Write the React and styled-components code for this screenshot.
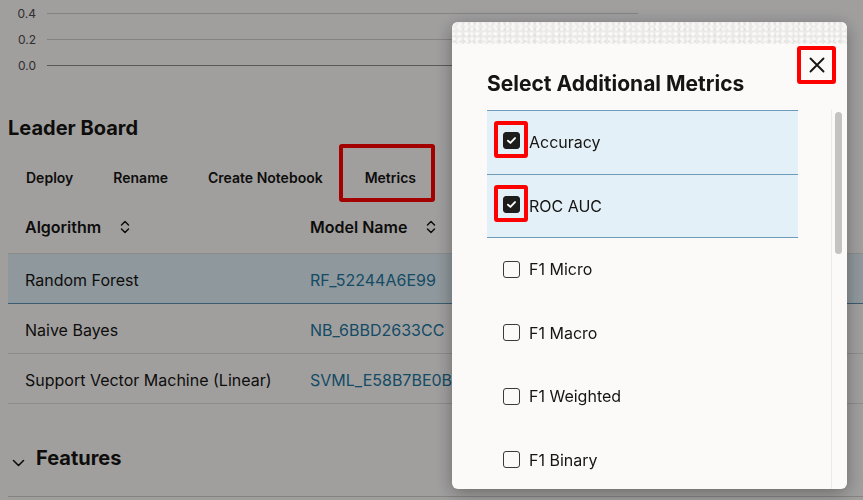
import styled, { createGlobalStyle } from "styled-components";

const GlobalStyle = createGlobalStyle`
  html, body {
    margin: 0;
    background: #fbf9f8;
  }
  body {
    font-family: Inter, "Noto Sans", sans-serif;
    color: #161513;
    overflow: hidden;
  }
`;

const Page = styled.div`
  padding-left: 8px;
  height: 500px;
`;

// chart remains (scrolled up, only the bottom ticks show)
const Chart = styled.div`
  display: flex;
  flex-direction: column;
  width: 630px;
`;

const GridRow = styled.div`
  display: flex;
  align-items: center;
  height: 26px;
`;

const Tick = styled.span`
  width: 28px;
  margin-right: 11px;
  text-align: right;
  font-size: 12px;
  color: #4a4a4a;
`;

const GridLine = styled.div`
  flex: 1;
  height: 1px;
  background: ${(p) => (p.$base ? "#8d8c8b" : "#cfcecd")};
`;

const Heading = styled.h2`
  margin: 37px 0 0;
  font-size: 20px;
  line-height: 26px;
  font-weight: 700;
`;

const Toolbar = styled.div`
  display: flex;
  align-items: center;
  gap: 4px;
  height: 44px;
  margin-top: 14px;
`;

const ToolButton = styled.button`
  all: unset;
  height: 44px;
  padding: 0 18px;
  font-size: 14px;
  font-weight: 600;
  display: flex;
  align-items: center;
`;

// red annotation box drawn around a control
const Mark = styled.span`
  display: inline-flex;
  flex: none;
  border: 4px solid #ff0000;
  border-radius: 3px;
  margin: ${(p) => p.$margin || "0"};
  padding: ${(p) => p.$padding || "0"};
`;

const MarkedButton = styled(ToolButton)`
  height: 42px;
  padding: 8px 15px 0 22px;
`;

const Table = styled.div`
  margin-top: 5px;
`;

const Row = styled.div`
  display: grid;
  grid-template-columns: 285px 1fr;
  align-items: center;
  height: 50px;
  box-sizing: border-box;
  padding: ${(p) => (p.$head ? "0 0 4px" : "2px 0 0")};
  border-bottom: 1px solid ${(p) => (p.$selected ? "#5b8fb1" : "#dcdbda")};
  background: ${(p) => (p.$selected ? "#e0eef5" : "transparent")};
`;

const HeadCell = styled.div`
  display: flex;
  align-items: center;
  gap: 18px;
  padding: 0 17px;
  font-size: 16px;
  font-weight: 600;
`;

const Cell = styled.div`
  padding: 0 17px;
  font-size: 16px;
  white-space: nowrap;
  color: ${(p) => (p.$link ? "#22769e" : "#161513")};
`;

const FeaturesHeader = styled.div`
  display: flex;
  align-items: center;
  gap: 11px;
  margin-top: 27px;
  padding: 15px 0 26px 4px;
  border-bottom: 1px solid #cfcecd;
  font-size: 20px;
  line-height: 24px;
  font-weight: 700;

  svg {
    margin-top: 10px;
  }
`;

const Scrim = styled.div`
  position: fixed;
  inset: 0;
  background: rgba(0, 0, 0, 0.36);
`;

const Dialog = styled.div`
  position: fixed;
  left: 452px;
  top: 22px;
  width: 395px;
  height: 467px;
  display: flex;
  flex-direction: column;
  background: #fbfaf8;
  border-radius: 6px;
  overflow: hidden;
  box-shadow: 0 4px 18px rgba(0, 0, 0, 0.35);
`;

const Banner = styled.div`
  height: 22px;
  flex: none;
  background-color: #ebeae8;
  background-image: radial-gradient(circle at 30% 40%, rgba(255, 255, 255, 0.6) 0 1.4px, transparent 2.4px),
    radial-gradient(circle at 70% 70%, rgba(255, 255, 255, 0.5) 0 1.2px, transparent 2.2px),
    radial-gradient(circle at 50% 20%, rgba(215, 214, 212, 0.45) 0 1px, transparent 2px);
  background-size: 6px 5px, 9px 7px, 5px 6px;
`;

const DialogHeader = styled.div`
  display: flex;
  justify-content: space-between;
  align-items: flex-start;
  padding: 2px 11px 0 35px;
  flex: none;
`;

const Title = styled.h3`
  margin: 25px 0 0;
  font-size: 21px;
  line-height: 26px;
  font-weight: 700;
`;

const CloseButton = styled.button`
  all: unset;
  box-sizing: border-box;
  width: 39px;
  height: 38px;
  border: 4px solid #ff0000;
  border-radius: 3px;
  display: flex;
  align-items: center;
  justify-content: center;
`;

const DialogBody = styled.div`
  flex: 1;
  min-height: 0;
  display: flex;
  margin-top: 13px;
  overflow: hidden;
`;

const MetricList = styled.div`
  width: 311px;
  margin-left: 35px;
  border-top: 1px solid #6f9bba;
  align-self: flex-start;
`;

const ScrollTrack = styled.div`
  width: 12px;
  margin: 0 4px 0 auto;
  box-sizing: border-box;
  border-left: 1px solid #ecebea;
  padding: 2px 0 0 3px;
`;

const ScrollThumb = styled.div`
  width: 7px;
  height: 142px;
  border-radius: 4px;
  background: #c3c3c3;
`;

const MetricItem = styled.label`
  display: flex;
  align-items: center;
  gap: 9px;
  height: 63.5px;
  box-sizing: border-box;
  padding-left: 16px;
  font-size: 16px;
  border-bottom: 1px solid ${(p) => (p.$checked ? "#6f9bba" : "transparent")};
  background: ${(p) => (p.$checked ? "#e4f0f7" : "transparent")};
`;

const Box = styled.span`
  box-sizing: border-box;
  width: 17px;
  height: 17px;
  flex: none;
  border-radius: 3px;
  border: 1.5px solid ${(p) => (p.$checked ? "#1d1d1d" : "#3a3a3a")};
  background: ${(p) => (p.$checked ? "#1d1d1d" : "transparent")};
  display: flex;
  align-items: center;
  justify-content: center;
`;

const SortIcon = () => (
  <svg width="12" height="16" viewBox="0 0 12 16" fill="none" stroke="#161513" strokeWidth="1.5" strokeLinecap="round" strokeLinejoin="round">
    <path d="M2.5 6 6 2.5 9.5 6" />
    <path d="M2.5 10 6 13.5 9.5 10" />
  </svg>
);

const Checkbox = ({ checked, marked }) => {
  const box = (
    <Box $checked={checked}>
      {checked && (
        <svg width="11" height="11" viewBox="0 0 10 10" fill="none" stroke="#fff" strokeWidth="1.7" strokeLinecap="round" strokeLinejoin="round">
          <path d="M1.8 5.2 4 7.2 8.2 2.8" />
        </svg>
      )}
    </Box>
  );
  if (!marked) return box;
  return (
    <Mark $margin="0 -8px 5px -9px" $padding="7px 4px 5px 5px">
      {box}
    </Mark>
  );
};

const models = [
  { algo: "Random Forest", name: "RF_52244A6E99", selected: true },
  { algo: "Naive Bayes", name: "NB_6BBD2633CC" },
  { algo: "Support Vector Machine (Linear)", name: "SVML_E58B7BE0B2" },
];

const metrics = [
  { label: "Accuracy", checked: true },
  { label: "ROC AUC", checked: true },
  { label: "F1 Micro" },
  { label: "F1 Macro" },
  { label: "F1 Weighted" },
  { label: "F1 Binary" },
];

export default function App() {
  return (
    <>
      <GlobalStyle />
      <Page>
        <Chart>
          {["0.4", "0.2", "0.0"].map((t) => (
            <GridRow key={t}>
              <Tick>{t}</Tick>
              <GridLine $base={t === "0.0"} />
            </GridRow>
          ))}
        </Chart>

        <Heading>Leader Board</Heading>
        <Toolbar>
          <ToolButton>Deploy</ToolButton>
          <ToolButton>Rename</ToolButton>
          <ToolButton>Create Notebook</ToolButton>
          <Mark $margin="0 0 8px -6px">
            <MarkedButton>Metrics</MarkedButton>
          </Mark>
        </Toolbar>

        <Table>
          <Row $head>
            <HeadCell>
              Algorithm <SortIcon />
            </HeadCell>
            <HeadCell>
              Model Name <SortIcon />
            </HeadCell>
          </Row>
          {models.map((m) => (
            <Row key={m.name} $selected={m.selected}>
              <Cell>{m.algo}</Cell>
              <Cell $link>{m.name}</Cell>
            </Row>
          ))}
        </Table>

        <FeaturesHeader>
          <svg width="13" height="8" viewBox="0 0 13 8" fill="none" stroke="#161513" strokeWidth="1.6" strokeLinecap="round" strokeLinejoin="round">
            <path d="M1.5 1.5 6.5 6.5 11.5 1.5" />
          </svg>
          Features
        </FeaturesHeader>
      </Page>

      <Scrim />

      <Dialog>
        <Banner />
        <DialogHeader>
          <Title>Select Additional Metrics</Title>
          <CloseButton aria-label="Close">
            <svg width="18" height="18" viewBox="0 0 18 18" fill="none" stroke="#161513" strokeWidth="1.9" strokeLinecap="round">
              <path d="M2.5 2.5 15.5 15.5M15.5 2.5 2.5 15.5" />
            </svg>
          </CloseButton>
        </DialogHeader>
        <DialogBody>
          <MetricList>
            {metrics.map((m) => (
              <MetricItem key={m.label} $checked={m.checked}>
                <Checkbox checked={m.checked} marked={m.checked} />
                {m.label}
              </MetricItem>
            ))}
          </MetricList>
          <ScrollTrack>
            <ScrollThumb />
          </ScrollTrack>
        </DialogBody>
      </Dialog>
    </>
  );
}
